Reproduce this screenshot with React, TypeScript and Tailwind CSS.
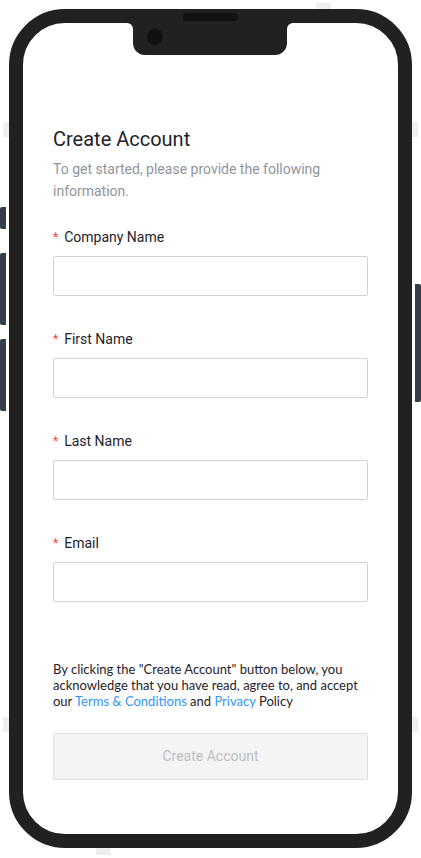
import React from "react"

const FIELDS = ["Company Name", "First Name", "Last Name", "Email"]

function Field({ label }: { label: string }) {
  return (
    <div className="flex flex-col gap-[9px]">
      <label className="flex h-[20px] items-center text-[14px] leading-[20px] text-[#1f2329]">
        <span className="mr-[6px] text-[12px] leading-none text-[#f54a45]">*</span>
        {label}
      </label>
      <input
        type="text"
        className="h-[40px] w-full rounded-[2px] border border-[#d0d3d6] bg-white px-3 text-[14px] outline-none"
      />
    </div>
  )
}

export default function App() {
  return (
    <div className="relative h-[858px] w-[421px] overflow-hidden bg-white font-['Roboto',sans-serif]">
      {/* faint squares peeking out behind the device */}
      <div className="absolute left-[3px] top-[122px] h-[15px] w-[15px] bg-[#efefef]" />
      <div className="absolute left-[403px] top-[122px] h-[15px] w-[15px] bg-[#efefef]" />
      <div className="absolute left-[3px] top-[717px] h-[15px] w-[15px] bg-[#efefef]" />
      <div className="absolute left-[403px] top-[717px] h-[15px] w-[15px] bg-[#efefef]" />
      <div className="absolute left-[316px] top-[3px] h-[15px] w-[15px] bg-[#efefef]" />
      <div className="absolute left-[96px] top-[840px] h-[15px] w-[15px] bg-[#efefef]" />

      <div className="relative flex gap-[3px] pt-[9px]">
        {/* left side buttons */}
        <div className="flex w-[6px] flex-col gap-[14px] pt-[198px]">
          <div className="h-[22px] rounded-l-[2px] bg-[#353d46]" />
          <div className="flex flex-col gap-[14px] pt-[10px]">
            <div className="h-[72px] rounded-l-[2px] bg-[#353d46]" />
            <div className="h-[72px] rounded-l-[2px] bg-[#353d46]" />
          </div>
        </div>

        {/* device */}
        <div className="relative h-[839px] w-[403px] rounded-[56px] border-[14px] border-[#22211f] bg-white">
          {/* notch */}
          <div className="absolute left-[110px] top-0 h-[32px] w-[154px] rounded-b-[12px] bg-[#22211f]" />
          <div className="absolute left-[104px] top-0 h-[8px] w-[8px] bg-[#22211f]" />
          <div className="absolute left-[104px] top-0 h-[8px] w-[6px] rounded-tr-[6px] bg-white" />
          <div className="absolute left-[262px] top-0 h-[8px] w-[8px] bg-[#22211f]" />
          <div className="absolute left-[264px] top-0 h-[8px] w-[6px] rounded-tl-[6px] bg-white" />
          <div className="absolute left-[160px] top-[-10px] h-[8px] w-[55px] rounded-full bg-[#111111]" />
          <div className="absolute left-[124px] top-[6px] h-[16px] w-[16px] rounded-full bg-[#111111]" />

          <div className="flex flex-col px-[30px] pt-[102px]">
            <h1 className="text-[20px] leading-[28px] font-normal text-[#1f2329]">Create Account</h1>
            <p className="mt-[5px] text-[14px] leading-[22px] text-[#8f959e]">
              To get started, please provide the following information.
            </p>

            <div className="mt-[25px] flex flex-col gap-[33px]">
              {FIELDS.map((f) => (
                <Field key={f} label={f} />
              ))}
            </div>

            <p className="mt-[59px] font-['Lato',sans-serif] text-[13px] leading-[16px] text-[#1f2329]">
              By clicking the "Create Account" button below, you acknowledge that you have read, agree to, and accept
              our <span className="text-[#3296fa]">Terms &amp; Conditions</span> and{" "}
              <span className="text-[#3296fa]">Privacy</span> Policy
            </p>

            <button
              disabled
              className="mt-[24px] h-[47px] w-full rounded-[2px] border border-[#dcdee0] bg-[#f4f4f4] text-[14px] text-[#bbbfc4]"
            >
              Create Account
            </button>
          </div>
        </div>

        {/* right side button */}
        <div className="flex w-[6px] flex-col pt-[275px]">
          <div className="h-[118px] rounded-r-[2px] bg-[#353d46]" />
        </div>
      </div>
    </div>
  )
}
